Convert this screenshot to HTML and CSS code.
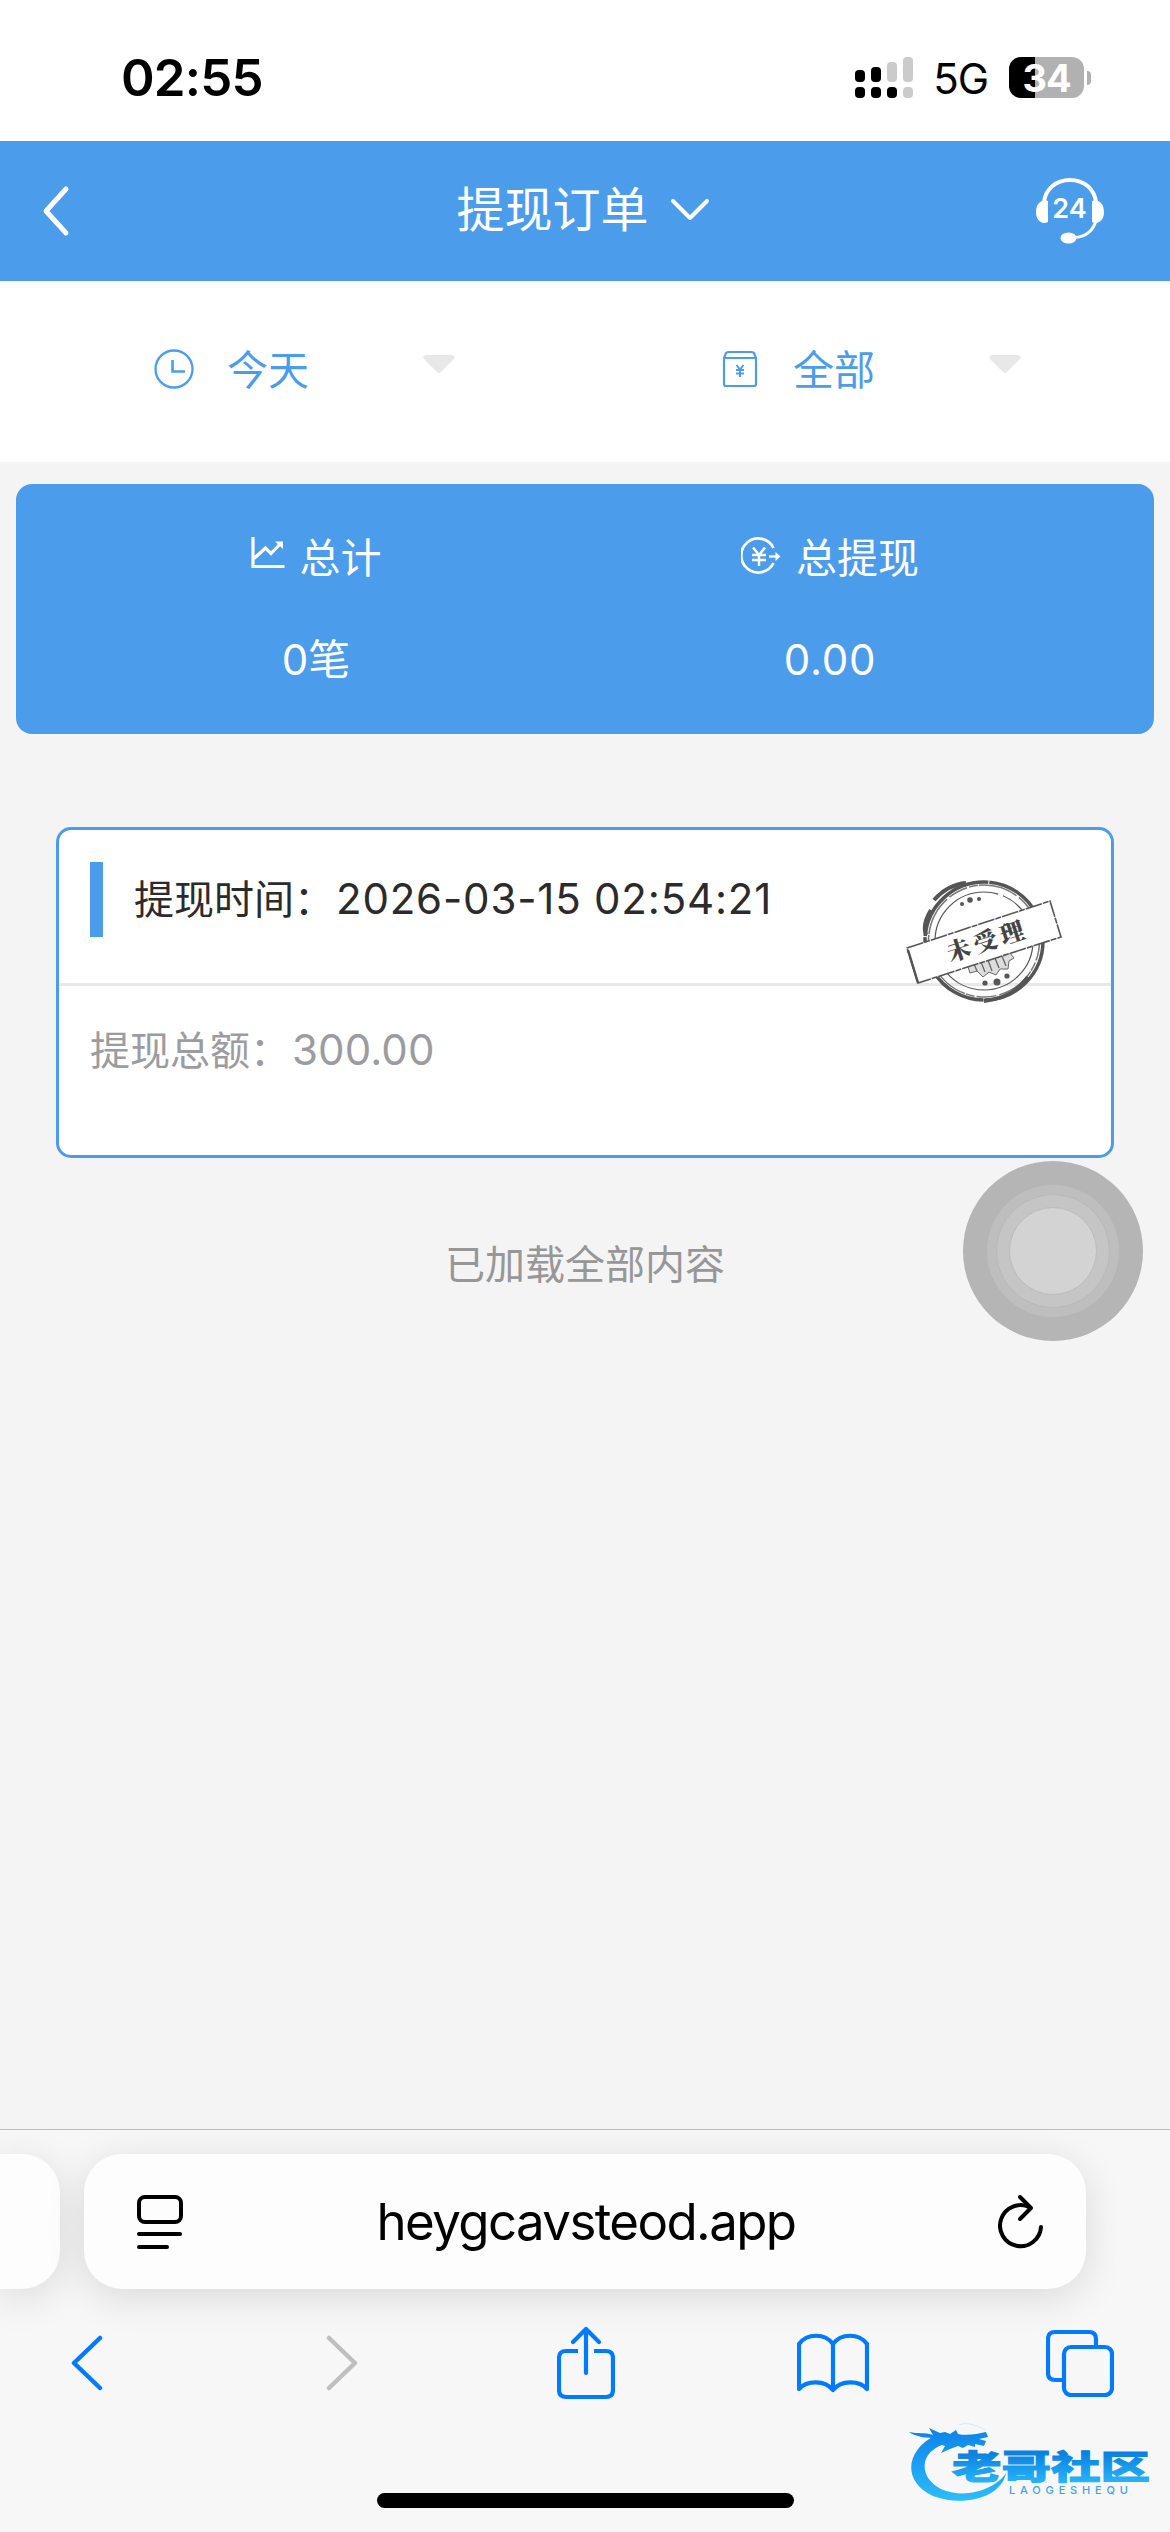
FILE: index.html
```html
<!DOCTYPE html>
<html lang="zh-CN">
<head>
  <meta charset="UTF-8">
  <title>提现订单</title>
  <link rel="stylesheet" href="styles.css">
</head>
<body>
<div class="page">
  <!-- 状态栏 -->
  <div class="status-bar">
    <span class="time">02:55</span>
    <svg class="signal" width="58" height="42" viewBox="0 0 58 42">
      <g fill="#000">
        <rect x="0" y="13" width="10" height="12" rx="4"/>
        <rect x="16" y="10" width="10" height="15" rx="4"/>
        <rect x="0" y="30" width="10" height="11" rx="4"/>
        <rect x="16" y="30" width="10" height="11" rx="4"/>
        <rect x="32" y="30" width="10" height="11" rx="4"/>
      </g>
      <g fill="#cbcbcb">
        <rect x="32" y="5" width="10" height="20" rx="4"/>
        <rect x="48" y="0" width="10" height="25" rx="4"/>
        <rect x="48" y="30" width="10" height="11" rx="4"/>
      </g>
    </svg>
    <span class="network">5G</span>
    <span class="battery">34</span>
    <span class="battery-cap"></span>
  </div>

  <!-- 标题栏 -->
  <div class="header">
    <svg class="back" width="30" height="54" viewBox="0 0 30 54">
      <path d="M25 5 5 27 25 49" fill="none" stroke="#fff" stroke-width="5" stroke-linecap="round" stroke-linejoin="round"/>
    </svg>
    <div class="title">
      <span>提现订单</span>
      <svg width="40" height="26" viewBox="0 0 40 26">
        <path d="M3 4 20 21 37 4" fill="none" stroke="#fff" stroke-width="4" stroke-linecap="round" stroke-linejoin="round"/>
      </svg>
    </div>
    <svg class="service" width="68" height="66" viewBox="0 0 68 66">
      <path d="M8 25C9 11 20 2 34 2s25 9 26 23" fill="none" stroke="#fff" stroke-width="4"/>
      <path d="M60 42C58 52 50 59 38 59.500" fill="none" stroke="#fff" stroke-width="3"/>
      <path d="M12 23C5 21 0 26 0 34s5 13 12 10zM56 23c7-2 12 3 12 11s-5 13-12 10z" fill="#fff"/>
      <ellipse cx="32.500" cy="60" rx="8" ry="5.500" fill="#fff"/>
      <text class="service-text" x="33.500" y="40" text-anchor="middle">24</text>
    </svg>
  </div>

  <!-- 筛选 -->
  <div class="filter">
    <div class="filter-item">
      <svg width="40" height="40" viewBox="0 0 40 40" fill="none" stroke="#4c9cec">
        <circle cx="20" cy="20" r="18.500" stroke-width="2.300"/>
        <path d="M18.500 11v11.500H31" stroke-width="2.600"/>
      </svg>
      <span>今天</span>
      <svg class="arrow" width="32" height="18" viewBox="0 0 32 18"><path d="M4 0H28Q34 1 30 5L18 17Q16 19 14 17L2 5Q-2 1 4 0" fill="#e8e8e8"/></svg>
    </div>
    <div class="filter-item">
      <svg width="40" height="40" viewBox="0 0 40 40" fill="none" stroke="#4c9cec" stroke-width="2.200">
        <path d="M4 9V35Q4 37 6 37H34Q36 37 36 35V9L34 4Q33 3 31 3H9Q7 3 6 4zM4 9H36"/>
        <path d="M16.500 16 20 20.500 23.500 16M20 20V28M16 21H24M16 24.500H24" stroke-width="2"/>
      </svg>
      <span>全部</span>
      <svg class="arrow" width="32" height="18" viewBox="0 0 32 18"><path d="M4 0H28Q34 1 30 5L18 17Q16 19 14 17L2 5Q-2 1 4 0" fill="#e8e8e8"/></svg>
    </div>
  </div>

  <!-- 汇总 -->
  <div class="summary">
    <div class="summary-item">
      <div class="summary-label">
        <svg class="icon-chart" width="34" height="32" viewBox="0 0 34 32">
          <path d="M2 0V29.500H33.500M3 21.500 14.500 11 20 16.500 30 6" fill="none" stroke="#fff" stroke-width="3.200"/>
          <path d="M24 4.500H32V12z" fill="#fff"/>
        </svg>
        <span>总计</span>
      </div>
      <div class="summary-value">0笔</div>
    </div>
    <div class="summary-item">
      <div class="summary-label">
        <svg class="icon-yen" width="40" height="38" viewBox="0 0 40 38" fill="none" stroke="#fff" stroke-width="2.800">
          <path d="M32.500 11A17 17 0 1 0 32.500 26"/>
          <path d="M12 10.500 18 18 24 10.500M18 18V29M11 18H25M11 23H25" stroke-width="2.500"/>
          <path d="M28 19.500H36" stroke-width="2.300"/>
          <path d="M34.500 15 39.500 19.500 34.500 24z" fill="#fff" stroke="none"/>
        </svg>
        <span>总提现</span>
      </div>
      <div class="summary-value amount">0.00</div>
    </div>
  </div>

  <!-- 订单 -->
  <div class="order">
    <div class="order-head"><span class="order-time">提现时间：<span class="num">2026-03-15 02:54:21</span></span></div>
    <div class="order-body">提现总额：<span class="num">300.00</span></div>
    <svg class="stamp" width="156" height="124" viewBox="0 0 156 124">
      <g fill="none" stroke="#555">
        <ellipse cx="78" cy="61" rx="59" ry="59" stroke-width="3.500" stroke-dasharray="92 1 60 1 35 1"/>
        <ellipse cx="78" cy="61" rx="55.500" ry="56" stroke="#777" stroke-width="1.500" stroke-dasharray="20 2 9 1 40 3"/>
        <path d="M20 55C17 47 20 38 25 30M28 20C37 10 47 4 60 3M122 97C112 111 98 119 78 121" stroke-width="4"/>
        <ellipse cx="78" cy="61" rx="49" ry="49" stroke-width="1.200" stroke-dasharray="120 5"/>
      </g>
      <g fill="#555">
        <circle cx="56" cy="24" r="2"/><circle cx="64" cy="20" r="2.800"/><circle cx="73" cy="19" r="2"/>
        <circle cx="79" cy="103" r="2.600"/><circle cx="91" cy="102" r="3.500"/><circle cx="101" cy="96" r="2.600"/>
      </g>
      <path d="M61 84 64 93 71 91 77 97 83 92 90 95 94 89 102 89 103 81 108 78 104 73z" fill="#ddd" stroke="#666" stroke-width="1"/>
      <path d="M68 84l3 7M75 82l4 10M82 80l4 11M89 78l4 10M96 76l4 10" stroke="#666" stroke-width="1.300"/>
      <path d="M1 68 144 21 155 57 12 103z" fill="#fff" stroke="#555" stroke-width="1.600" stroke-dasharray="17 1 6 1"/>
      <path d="M2 70 12 103" stroke="#555" stroke-width="2.500"/>
      <text class="stamp-text" transform="translate(44 82) rotate(-18)">未受理</text>
    </svg>
  </div>
  <div class="loaded">已加载全部内容</div>

  <!-- 浏览器底栏 -->
  <div class="browser">
    <div class="tabs">
      <div class="tab-prev"></div>
      <div class="address">
        <svg width="46" height="56" viewBox="0 0 46 56" fill="none" stroke="#000" stroke-width="4" stroke-linecap="round">
          <rect x="2" y="3" width="42" height="25" rx="6"/>
          <path d="M2 40H43M2 53H30"/>
        </svg>
        <span>heygcavsteod.app</span>
        <svg width="46" height="56" viewBox="0 0 46 56" fill="none" stroke="#000" stroke-width="4" stroke-linecap="round" stroke-linejoin="round">
          <path d="M32 13.500A20.500 20.500 0 1 0 43 33"/>
          <path d="M22 3 33 14 22 25"/>
        </svg>
      </div>
    </div>
    <div class="toolbar">
      <svg width="32" height="56" viewBox="0 0 32 56"><path d="M29 3 3 28 29 53" fill="none" stroke="#007aff" stroke-width="4.500" stroke-linecap="round" stroke-linejoin="round"/></svg>
      <svg class="forward" width="32" height="56" viewBox="0 0 32 56"><path d="M3 3 29 28 3 53" fill="none" stroke="#bfbfbf" stroke-width="4.500" stroke-linecap="round" stroke-linejoin="round"/></svg>
      <svg class="share" width="58" height="74" viewBox="0 0 58 74" fill="none" stroke="#007aff" stroke-width="4.200">
        <path d="M21 25H9Q2 25 2 32V64Q2 71 9 71H49Q56 71 56 64V32Q56 25 49 25H37"/>
        <path d="M29 47V3M16 16 29 3 42 16" stroke-linecap="round" stroke-linejoin="round"/>
      </svg>
      <svg class="bookmarks" width="72" height="60" viewBox="0 0 72 60" fill="none" stroke="#007aff" stroke-width="4.200" stroke-linejoin="round">
        <path d="M36 11C28 0 10 0 2 11V56C10 47 28 47 36 57C44 47 62 47 70 56V11C62 0 44 0 36 11zV57"/>
      </svg>
      <svg class="windows" width="68" height="68" viewBox="0 0 68 68" fill="none" stroke="#007aff" stroke-width="4.200">
        <path d="M16 51H9Q2 51 2 44V10Q2 3 9 3H43Q50 3 50 10V17"/>
        <rect x="18" y="18" width="48" height="48" rx="7"/>
      </svg>
    </div>
    <div class="home-indicator"></div>
  </div>

  <!-- 悬浮按钮 -->
  <div class="touch"><div class="touch-outer"><div class="touch-middle"><div class="touch-inner"></div></div></div></div>

  <!-- 社区水印 -->
  <svg class="watermark" width="246" height="84" viewBox="0 0 246 84">
    <defs>
      <linearGradient id="blue" gradientUnits="userSpaceOnUse" x1="0" y1="5" x2="0" y2="80">
        <stop offset="0" stop-color="#0b80e8"/>
        <stop offset="1" stop-color="#2cbcfb"/>
      </linearGradient>
      <linearGradient id="text-blue" x1="0" y1="0" x2="0" y2="1">
        <stop offset=".25" stop-color="#0b80e0"/>
        <stop offset=".9" stop-color="#28b8fa"/>
      </linearGradient>
    </defs>
    <path d="M27 15C-4 30-7 62 24 76C52 87 92 79 97 53C87 69 56 80 32 69C8 57 10 29 40 23z" fill="url(#blue)"/>
    <path d="M0 12C9 14 15 12 24 15L20 8 31 13 36 12 41 14 47 10 49 14C58 16 68 14 77 12L79 17 70 19 77 21 75 26 66 24 66 27 59 25 54 28 49 26 41 29 32 33 36 26 24 22 28 18C17 18 7 17 0 12z" fill="url(#blue)"/>
    <path d="M50 5C56 2 66 4 76 10" fill="none" stroke="#d5eafa" stroke-width="1"/>
    <text class="mark-cn" x="43" y="59" textLength="198" lengthAdjust="spacingAndGlyphs" fill="url(#text-blue)" stroke="url(#text-blue)">老哥社区</text>
    <text class="mark-en" x="100" y="74" textLength="119">LAOGESHEQU</text>
  </svg>
</div>
</body>
</html>
```
FILE: styles.css
```css
* {
  box-sizing: border-box;
}

body {
  margin: 0;
  background-color: #f4f4f4;
  font-family: Inter, "Noto Sans CJK SC", sans-serif;
}

svg {
  display: block;
  flex-shrink: 0;
}

.page {
  position: relative;
  display: flex;
  flex-direction: column;
  width: 1170px;
  height: 2532px;
  overflow: hidden;
}

.status-bar {
  display: flex;
  align-items: center;
  height: 141px;
  padding: 14px 79px 0 121px;
  background-color: #fff;
}

.time {
  width: 735px;
  font-size: 51px;
  font-weight: 600;
  letter-spacing: -0.8px;
  line-height: 60px;
}

.network {
  width: 76px;
  margin-left: 20px;
  padding-top: 2px;
  font-size: 42px;
  letter-spacing: -1px;
  line-height: 50px;
}

.battery {
  width: 75px;
  height: 41px;
  border-radius: 12px;
  background: linear-gradient(90deg, #000 26px, #b1b1b1 26px);
  color: #fff;
  font-size: 38px;
  font-weight: 700;
  letter-spacing: -1px;
  line-height: 42px;
  text-align: center;
}

.battery-cap {
  width: 4px;
  height: 14px;
  margin-left: 3px;
  border-radius: 0 5px 5px 0;
  background-color: #b1b1b1;
}

.header {
  display: flex;
  align-items: center;
  justify-content: space-between;
  height: 140px;
  padding: 0 66px 0 41px;
  background-color: #4c9cec;
  color: #fff;
}

.title {
  display: flex;
  align-items: center;
  gap: 21px;
  margin-left: 59px;
  padding-bottom: 3px;
  font-size: 48px;
  line-height: 60px;
}

.service-text {
  fill: #fff;
  font-size: 27px;
  font-weight: 600;
}

.filter {
  display: flex;
  height: 181px;
  background-color: #fff;
}

.filter-item {
  display: flex;
  align-items: center;
  width: 566px;
  height: 176px;
  padding-left: 154px;
  color: #4c9cec;
  font-size: 41px;
  line-height: 50px;
}

.filter-item span {
  width: 196px;
  margin-left: 33px;
  padding-top: 2px;
}

.arrow {
  margin-top: -10px;
}

.summary {
  display: flex;
  height: 250px;
  margin: 22px 16px 0;
  padding: 50px 67px 0 43px;
  border-radius: 16px;
  background-color: #4c9cec;
  color: #fff;
}

.summary-item {
  width: 514px;
  text-align: center;
}

.summary-label {
  display: flex;
  justify-content: center;
  gap: 15px;
  height: 101px;
  font-size: 41px;
  line-height: 49px;
}

.icon-chart,
.icon-yen {
  margin-top: 3px;
}

.summary-value {
  font-size: 42px;
  line-height: 50px;
}

.amount {
  letter-spacing: 0.8px;
}

.order {
  position: relative;
  height: 331px;
  margin: 93px 56px 0;
  border: 3px solid #4c9cec;
  border-radius: 15px;
  background-color: #fff;
  font-size: 40px;
}

.order-head {
  height: 156px;
  padding: 32px 31px 0;
  border-bottom: 3px solid #e8e8e8;
}

.order-time {
  display: block;
  padding-left: 31px;
  border-left: 13px solid #4c9cec;
  color: #2b2b2b;
  line-height: 74px;
}

.order-body {
  padding: 39px 31px 0;
  color: #9b9c9f;
  line-height: 50px;
}

.num {
  margin-left: 2px;
  font-size: 42px;
  letter-spacing: 0.8px;
}

.order-body .num {
  letter-spacing: 0.1px;
}

.stamp {
  position: absolute;
  top: 50px;
  left: 847px;
}

.stamp-text {
  fill: #444;
  font-family: "Noto Serif CJK SC", "Noto Sans CJK SC", serif;
  font-size: 24px;
  font-weight: 900;
  letter-spacing: 4px;
}

.loaded {
  margin-top: 82px;
  color: #979797;
  font-size: 40px;
  line-height: 50px;
  text-align: center;
}

.browser {
  height: 403px;
  margin-top: auto;
  border-top: 1px solid #bdbdbd;
  background-color: #f7f7f7;
  overflow: hidden;
}

.tabs {
  display: flex;
  gap: 24px;
  padding-top: 24px;
}

.tab-prev {
  width: 60px;
  height: 135px;
  border-radius: 0 38px 38px 0;
  background-color: #fdfdfd;
  box-shadow: 0 8px 40px rgba(0, 0, 0, 0.12);
}

.address {
  display: flex;
  align-items: center;
  justify-content: space-between;
  width: 1002px;
  height: 135px;
  padding: 0 42px 0 53px;
  border-radius: 38px;
  background-color: #fdfdfd;
  box-shadow: 0 8px 40px rgba(0, 0, 0, 0.12);
  font-size: 51px;
  letter-spacing: -1.6px;
}

.address span {
  margin-right: 9px;
}

.toolbar {
  display: flex;
  align-items: center;
  height: 76px;
  margin-top: 36px;
  padding-left: 71px;
}

.forward {
  margin-left: 223px;
}

.share {
  margin-left: 199px;
}

.bookmarks {
  margin-left: 182px;
}

.windows {
  margin-left: 177px;
}

.home-indicator {
  width: 417px;
  height: 15px;
  margin: 92px auto 0;
  border-radius: 8px;
  background-color: #000;
}

.touch {
  position: absolute;
  top: 1161px;
  left: 963px;
  width: 180px;
  height: 180px;
  padding: 24px;
  border-radius: 50%;
  background-color: #b5b5b5;
}

.touch-outer {
  height: 132px;
  padding: 9px;
  border-radius: 50%;
  background-color: #bebebe;
}

.touch-middle {
  height: 114px;
  padding: 12px;
  border: 1px solid #b9b9b9;
  border-radius: 50%;
  background-color: #c5c5c5;
}

.touch-inner {
  height: 88px;
  border: 1px solid #bcbcbc;
  border-radius: 50%;
  background-color: #d3d3d3;
}

.watermark {
  position: absolute;
  top: 2420px;
  left: 909px;
}

.mark-cn {
  font-family: "Noto Sans CJK SC", sans-serif;
  font-size: 33px;
  font-weight: 900;
  stroke-width: 1px;
}

.mark-en {
  fill: #3fa3e6;
  font-size: 11px;
  font-weight: 500;
}
```
